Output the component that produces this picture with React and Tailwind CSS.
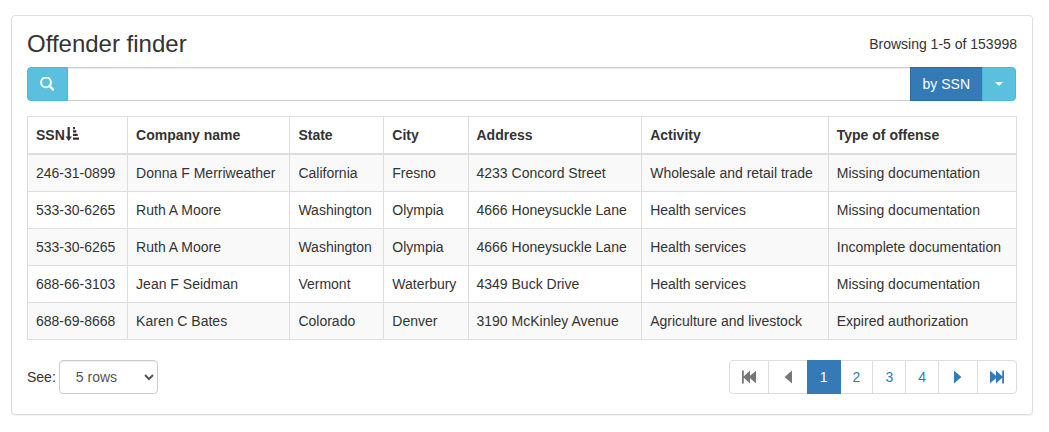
import React, { useState } from "react";

const COLUMNS = ["SSN", "Company name", "State", "City", "Address", "Activity", "Type of offense"];

const ROWS = [
  ["246-31-0899", "Donna F Merriweather", "California", "Fresno", "4233 Concord Street", "Wholesale and retail trade", "Missing documentation"],
  ["533-30-6265", "Ruth A Moore", "Washington", "Olympia", "4666 Honeysuckle Lane", "Health services", "Missing documentation"],
  ["533-30-6265", "Ruth A Moore", "Washington", "Olympia", "4666 Honeysuckle Lane", "Health services", "Incomplete documentation"],
  ["688-66-3103", "Jean F Seidman", "Vermont", "Waterbury", "4349 Buck Drive", "Health services", "Missing documentation"],
  ["688-69-8668", "Karen C Bates", "Colorado", "Denver", "3190 McKinley Avenue", "Agriculture and livestock", "Expired authorization"],
];

function Icon({ className = "block", children }) {
  return (
    <svg aria-hidden="true" width="14" height="14" viewBox="0 0 14 14" fill="currentColor" className={className}>
      {children}
    </svg>
  );
}

function SearchIcon() {
  return (
    <Icon>
      <circle cx="6" cy="5.4" r="4.9" fill="none" stroke="currentColor" strokeWidth="2" />
      <path d="M9.4 8.8 L13.2 12.6" stroke="currentColor" strokeWidth="2.4" strokeLinecap="round" />
    </Icon>
  );
}

function SortIcon() {
  return (
    <Icon className="inline-block align-[-1px]">
      <path d="M2.6 0h2.2v9.6h2.1L3.75 14 0.6 9.6h2z" />
      <path d="M8 0h2v2.2H8zM8 3.3h3.3v2.3H8zM8 6.8h4.7v2.3H8zM8 10.4h6v2.4H8z" />
    </Icon>
  );
}

function FirstIcon() {
  return (
    <Icon>
      <path d="M0 0.5h1.8v5.7L8 0.5v5.3L14.4 0.5v13L8 8.2v5.3L1.8 7.8v5.7H0z" />
    </Icon>
  );
}

function PreviousIcon() {
  return (
    <Icon>
      <path d="M11 0.4v13.2L3.6 7z" />
    </Icon>
  );
}

function NextIcon() {
  return (
    <Icon>
      <path d="M3 0.4v13.2L10.4 7z" />
    </Icon>
  );
}

function LastIcon() {
  return (
    <Icon>
      <path d="M14 0.5h-1.8v5.7L6 0.5v5.3L-0.4 0.5v13L6 8.2v5.3L12.2 7.8v5.7H14z" />
    </Icon>
  );
}

const PAGES = [
  { label: "First page", icon: <FirstIcon />, disabled: true },
  { label: "Previous page", icon: <PreviousIcon />, disabled: true },
  { label: "1", active: true },
  { label: "2" },
  { label: "3" },
  { label: "4" },
  { label: "Next page", icon: <NextIcon /> },
  { label: "Last page", icon: <LastIcon /> },
];

function pageStyle(page) {
  if (page.active) return "relative border-[#337ab7] bg-[#337ab7] text-white";
  if (page.disabled) return "cursor-not-allowed border-[#ddd] bg-white text-[#777]";
  return "border-[#ddd] bg-white text-[#337ab7] hover:bg-[#eee]";
}

function SearchBar() {
  const [query, setQuery] = useState("");
  return (
    <form className="mt-2.5 mr-px flex h-[34px]" onSubmit={(e) => e.preventDefault()}>
      <button
        type="submit"
        aria-label="Search"
        className="flex w-[41px] items-center rounded-l border border-[#46b8da] bg-[#5bc0de] px-3 text-white"
      >
        <SearchIcon />
      </button>
      <input
        type="text"
        aria-label="Search text"
        value={query}
        onChange={(e) => setQuery(e.target.value)}
        className="min-w-0 flex-1 border-y border-[#ccc] bg-white px-3 text-[#555] shadow-[inset_0_1px_1px_rgba(0,0,0,0.075)] outline-none"
      />
      <button type="button" className="border border-[#2e6da4] bg-[#337ab7] px-3 text-white">
        by SSN
      </button>
      <button
        type="button"
        aria-label="Choose search field"
        className="-ml-px flex items-center rounded-r border border-[#46b8da] bg-[#5bc0de] px-3 text-white"
      >
        <svg aria-hidden="true" width="8" height="4" viewBox="0 0 8 4" fill="currentColor">
          <path d="M0 0h8L4 4z" />
        </svg>
      </button>
    </form>
  );
}

function OffenderTable() {
  return (
    <table className="mt-[15px] w-full border-collapse border border-[#ddd] bg-white text-left">
      <thead>
        <tr>
          {COLUMNS.map((name, i) => (
            <th key={name} scope="col" className="border border-b-2 border-[#ddd] p-2 align-bottom font-bold">
              {name}
              {i === 0 && <SortIcon />}
            </th>
          ))}
        </tr>
      </thead>
      <tbody>
        {ROWS.map((row, r) => (
          <tr key={r} className="odd:bg-[#f9f9f9]">
            {row.map((cell, c) => (
              <td key={c} className="border border-[#ddd] p-2 align-top">
                {cell}
              </td>
            ))}
          </tr>
        ))}
      </tbody>
    </table>
  );
}

function Pagination() {
  return (
    <nav aria-label="Pages">
      <ul className="flex">
        {PAGES.map((page) => (
          <li key={page.label} className="group -ml-px first:ml-0">
            <a
              href="#"
              aria-label={page.label}
              aria-current={page.active ? "page" : undefined}
              aria-disabled={page.disabled ? "true" : undefined}
              className={`flex h-[34px] items-center border px-3 group-first:rounded-l group-last:rounded-r ${pageStyle(page)}`}
            >
              {page.icon || page.label}
            </a>
          </li>
        ))}
      </ul>
    </nav>
  );
}

export default function App() {
  return (
    <main className="bg-white pt-[15px] pr-4 pb-4 pl-[11px] font-['Liberation_Sans',Arial,sans-serif] text-[14px] leading-5 text-[#333]">
      <section className="rounded border border-[#ddd] bg-white px-[15px] pt-[15px] pb-5 shadow-[0_1px_1px_rgba(0,0,0,0.05)]">
        <header className="flex items-center justify-between">
          <h1 className="text-[24px] leading-[26px] font-medium">Offender finder</h1>
          <p>Browsing 1-5 of 153998</p>
        </header>
        <SearchBar />
        <OffenderTable />
        <footer className="mt-5 flex items-center justify-between">
          <div className="flex items-center gap-[3px]">
            <label htmlFor="page-size">See:</label>
            <select
              id="page-size"
              defaultValue="5"
              className="h-[34px] w-[99px] rounded border border-[#ccc] bg-white px-3 py-1.5 text-[#555] shadow-[inset_0_1px_1px_rgba(0,0,0,0.075)]"
            >
              <option value="5">5 rows</option>
              <option value="10">10 rows</option>
              <option value="20">20 rows</option>
              <option value="50">50 rows</option>
            </select>
          </div>
          <Pagination />
        </footer>
      </section>
    </main>
  );
}
